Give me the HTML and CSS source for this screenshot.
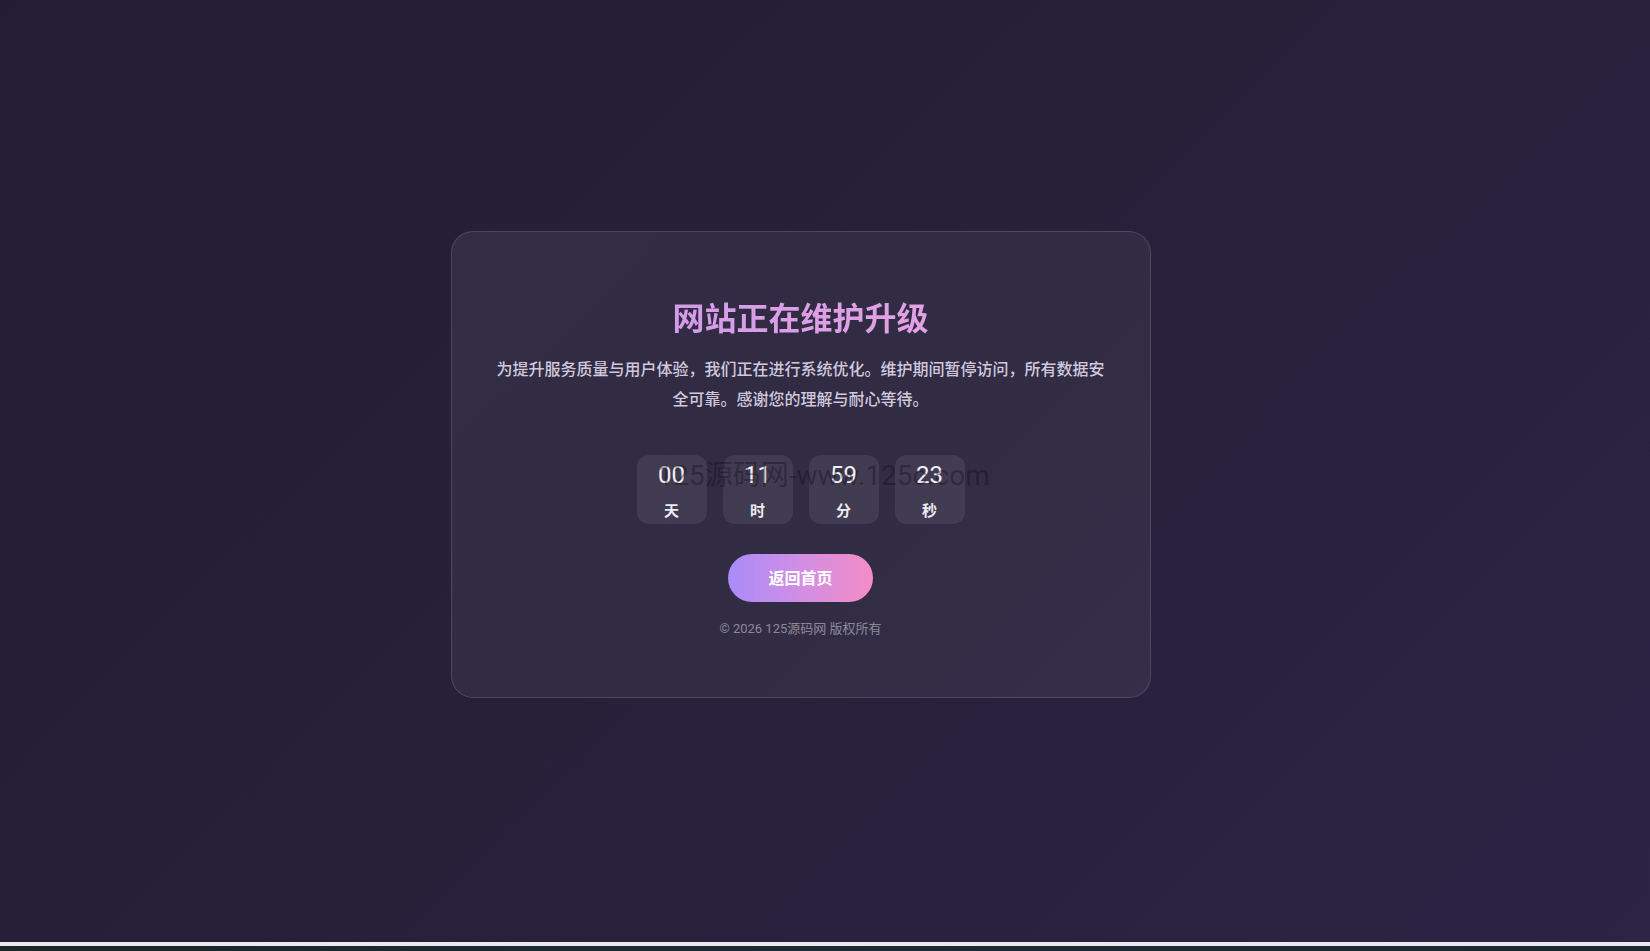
FILE: index.html
```html
<!DOCTYPE html>
<html lang="zh-CN">
<head>
<meta charset="utf-8">
<title>网站正在维护升级</title>
<link rel="stylesheet" href="styles.css">
</head>
<body>
<main class="page">
  <section class="card">
    <h1 class="title">网站正在维护升级</h1>
    <p class="desc">为提升服务质量与用户体验，我们正在进行系统优化。维护期间暂停访问，所有数据安全可靠。感谢您的理解与耐心等待。</p>
    <div class="countdown">
      <div class="unit"><span class="num">00</span><span class="label">天</span></div>
      <div class="unit"><span class="num">11</span><span class="label">时</span></div>
      <div class="unit"><span class="num">59</span><span class="label">分</span></div>
      <div class="unit"><span class="num">23</span><span class="label">秒</span></div>
    </div>
    <a class="btn" href="#">返回首页</a>
    <p class="copy">© 2026 125源码网 版权所有</p>
    <div class="watermark">125源码网-www.125c.com</div>
  </section>
</main>
<div class="strip-light"></div>
<div class="strip-dark"></div>
</body>
</html>
```

FILE: styles.css
```css
html, body {
  margin: 0;
  padding: 0;
  background: #1b2a30;
}

body {
  font-family: Roboto, "Noto Sans CJK SC", "Noto Sans", sans-serif;
  overflow: hidden;
}

.page {
  height: 942px;
  box-sizing: border-box;
  padding: 0 49px 13px 0;
  display: flex;
  align-items: center;
  justify-content: center;
  background: linear-gradient(135deg, #221d35 0%, #262039 45%, #29223f 75%, #2b2445 100%);
}

.card {
  position: relative;
  width: 700px;
  box-sizing: border-box;
  padding: 65px 40px 59px;
  border: 1px solid rgba(255, 255, 255, 0.13);
  border-radius: 22px;
  background: linear-gradient(135deg, rgba(255, 255, 255, 0.065) 0%, rgba(255, 255, 255, 0.05) 50%, rgba(255, 255, 255, 0.06) 100%);
  text-align: center;
}

.title {
  margin: 0 0 20px;
  font-size: 32px;
  line-height: 38px;
  font-weight: 700;
  font-family: "Noto Sans CJK SC", sans-serif;
  background: linear-gradient(90deg, #c996ee 0%, #dc9fe6 50%, #eaa4dc 100%);
  -webkit-background-clip: text;
  background-clip: text;
  color: transparent;
}

.desc {
  margin: 0 0 40px;
  font-size: 16px;
  line-height: 29.6px;
  font-weight: 500;
  color: #cfcadb;
}

.countdown {
  display: flex;
  justify-content: center;
  gap: 16px;
  margin-bottom: 30px;
}

.unit {
  width: 70px;
  height: 69px;
  box-sizing: border-box;
  padding-top: 6px;
  border-radius: 12px;
  background: rgba(255, 255, 255, 0.08);
  display: flex;
  flex-direction: column;
  align-items: center;
}

.num {
  font-size: 24px;
  line-height: 28px;
  font-weight: 400;
  color: #f3f1f7;
}

.label {
  margin-top: 10px;
  font-size: 15px;
  line-height: 22px;
  font-weight: 700;
  color: #ecebf1;
  font-family: "Noto Sans CJK SC", sans-serif;
}

.btn {
  display: inline-block;
  height: 48px;
  line-height: 47px;
  padding: 0 40px;
  border-radius: 24px;
  background: linear-gradient(90deg, #a98bf9 0%, #d18ee4 50%, #f58cc6 100%);
  color: #ffffff;
  font-size: 16px;
  font-weight: 700;
  text-decoration: none;
  font-family: "Noto Sans CJK SC", sans-serif;
}

.copy {
  margin: 17px 0 0;
  font-size: 13px;
  line-height: 19px;
  color: rgba(255, 255, 255, 0.45);
}

.watermark {
  position: absolute;
  left: 206px;
  top: 230px;
  font-size: 28px;
  line-height: 28px;
  font-weight: 400;
  color: rgba(16, 12, 26, 0.38);
  white-space: nowrap;
  pointer-events: none;
}

.strip-light {
  height: 4px;
  background: #ebe9f0;
}

.strip-dark {
  height: 5px;
  background: linear-gradient(90deg, #1a2826 0%, #1b2c38 50%, #1a2a30 100%);
}
```
